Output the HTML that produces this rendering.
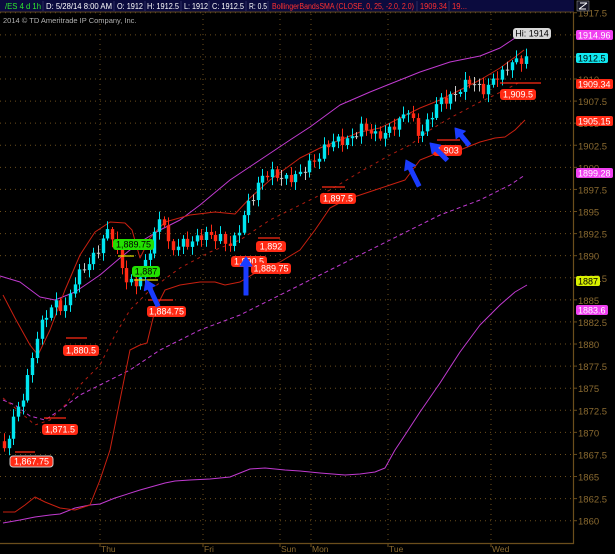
<!DOCTYPE html>
<html><head><meta charset="utf-8">
<style>
html,body{margin:0;padding:0;background:#000;width:615px;height:554px;overflow:hidden}
svg{display:block}
text{font-family:"Liberation Sans",sans-serif}
</style></head>
<body>
<svg id="s" width="615" height="554" viewBox="0 0 615 554" xmlns="http://www.w3.org/2000/svg">
<rect width="615" height="554" fill="#000"/>
<g id="grid"></g>
<rect x="0" y="0" width="574" height="12" fill="#0b0b3e"/>
<line x1="0" y1="12" x2="574" y2="12" stroke="#5a4320" stroke-width="1"/>
<g font-size="8" fill="#fff" lengthAdjust="spacingAndGlyphs">
<text x="5" y="9" fill="#2ee82e" textLength="36" lengthAdjust="spacingAndGlyphs">/ES 4 d 1h</text>
<text x="46" y="9" textLength="66" lengthAdjust="spacingAndGlyphs">D: 5/28/14 8:00 AM</text>
<text x="117" y="9" textLength="26" lengthAdjust="spacingAndGlyphs">O: 1912</text>
<text x="147" y="9" textLength="32" lengthAdjust="spacingAndGlyphs">H: 1912.5</text>
<text x="184" y="9" textLength="24" lengthAdjust="spacingAndGlyphs">L: 1912</text>
<text x="212" y="9" textLength="32" lengthAdjust="spacingAndGlyphs">C: 1912.5</text>
<text x="249" y="9" textLength="18" lengthAdjust="spacingAndGlyphs">R: 0.5</text>
<text x="272" y="9" fill="#ff3030" textLength="142" lengthAdjust="spacingAndGlyphs">BollingerBandsSMA (CLOSE, 0, 25, -2.0, 2.0)</text>
<text x="420" y="9" fill="#ff3030" textLength="27" lengthAdjust="spacingAndGlyphs">1909.34</text>
<text x="452" y="9" fill="#ff3030" textLength="15" lengthAdjust="spacingAndGlyphs">19...</text>
</g>
<g stroke="#34346a" stroke-width="0.8">
<line x1="43" y1="1" x2="43" y2="11"/><line x1="114" y1="1" x2="114" y2="11"/><line x1="145" y1="1" x2="145" y2="11"/><line x1="181" y1="1" x2="181" y2="11"/><line x1="209" y1="1" x2="209" y2="11"/><line x1="246" y1="1" x2="246" y2="11"/><line x1="268" y1="1" x2="268" y2="11"/><line x1="417" y1="1" x2="417" y2="11"/><line x1="449" y1="1" x2="449" y2="11"/>
</g>
<rect x="577" y="1" width="12" height="10" fill="#1a1a2a" stroke="#888" stroke-width="0.6"/>
<path d="M579 9 L587 3 M580 3 L587 3 M579 9 L586 9" stroke="#fff" stroke-width="1" fill="none"/>
<text x="3" y="23" font-size="7.5" fill="#b0b0b0">2014 © TD Ameritrade IP Company, Inc.</text>
<g id="plot"></g>
<g id="lbl"></g>
</svg>
<script>
var NS="http://www.w3.org/2000/svg";
function el(p,t,a,txt){var e=document.createElementNS(NS,t);for(var k in a)e.setAttribute(k,a[k]);if(txt!=null)e.textContent=txt;p.appendChild(e);return e;}
var grid=document.getElementById('grid'),plot=document.getElementById('plot'),lbl=document.getElementById('lbl');
function Y(p){return 79+(1910-p)*8.834;}
for(var p=1860;p<=1917.5;p+=2.5){var y=Y(p);
 el(grid,'line',{x1:0,y1:y,x2:573,y2:y,stroke:'#6b4e1c','stroke-width':1,'stroke-dasharray':'1 4'});
 el(grid,'line',{x1:573,y1:y,x2:577,y2:y,stroke:'#6b4e1c','stroke-width':1});
 el(grid,'text',{x:578,y:y+4,'font-size':'9.5',fill:'#8a6a30'},(p%1?p.toFixed(1):p.toString()));}
var days=[[100,'Thu'],[203,'Fri'],[280,'Sun'],[311,'Mon'],[388,'Tue'],[491,'Wed']];
days.forEach(function(d){el(grid,'line',{x1:d[0],y1:14,x2:d[0],y2:543,stroke:'#6b4e1c','stroke-width':1,'stroke-dasharray':'1 4'});
 el(grid,'line',{x1:d[0],y1:543,x2:d[0],y2:547,stroke:'#6b4e1c'});
 el(grid,'text',{x:d[0]+1,y:552,'font-size':'8.5',fill:'#8a6a30'},d[1]);});
el(grid,'path',{d:'M0 543.5 H573.5 V13',stroke:'#6b4e1c','stroke-width':1.2,fill:'none'});
function pl(pts,col,dash,w){var d='M'+pts.map(function(q){return q.join(' ')}).join(' L');var a={d:d,stroke:col,'stroke-width':w||1,fill:'none','stroke-linejoin':'round'};if(dash)a['stroke-dasharray']=dash;el(plot,'path',a);}
pl([[0,276],[20,282],[40,297],[55,300],[75,292],[100,275],[120,258],[140,242],[160,230],[180,220],[200,205],[230,180],[260,160],[290,140],[310,127],[340,105],[370,92],[400,80],[420,72],[450,62],[480,56],[500,48],[515,38],[521,31]],'#c03ad0');
pl([[3,400],[15,405],[30,416],[45,420],[60,410],[80,395],[100,385],[130,370],[160,350],[200,330],[240,315],[280,295],[320,275],[360,255],[400,235],[440,215],[480,200],[510,185],[525,175]],'#c03ad0','4 3');
pl([[3,523],[20,520],[35,517],[50,515],[60,514],[75,508],[90,505],[100,504],[115,498],[140,490],[165,483],[175,481],[190,480],[210,479],[230,477],[250,469],[265,468],[285,470],[300,471],[320,473],[345,475],[360,474],[375,472],[385,468],[395,450],[405,435],[420,412],[440,383],[460,352],[480,325],[500,305],[515,292],[527,285]],'#c03ad0');
pl([[3,295],[15,318],[30,345],[38,355],[50,330],[65,290],[80,255],[95,232],[110,222],[125,223],[132,230],[140,258],[150,238],[165,222],[190,215],[215,212],[235,214],[250,198],[270,180],[300,158],[320,148],[340,140],[360,132],[380,128],[400,118],[420,108],[440,100],[460,90],[480,80],[500,68],[515,57],[524,50]],'#c82010');
pl([[3,512],[15,512],[25,505],[35,497],[45,502],[60,508],[75,510],[90,505],[100,480],[110,450],[120,400],[130,350],[140,345],[147,343],[155,310],[165,290],[180,285],[200,282],[215,282],[225,285],[240,282],[260,270],[280,262],[300,250],[315,230],[330,208],[345,200],[360,195],[375,190],[390,185],[405,180],[420,160],[440,152],[460,150],[480,142],[495,138],[505,137],[515,130],[525,120]],'#c82010');
pl([[3,398],[20,412],[35,425],[50,420],[65,405],[80,385],[100,365],[115,335],[130,310],[150,290],[180,268],[210,252],[240,240],[270,220],[300,205],[330,190],[360,172],[390,155],[410,145],[430,130],[450,118],[480,102],[505,90],[520,82]],'#b01c10','3 4');
var key=[[5,1868],[15,1872],[25,1875],[35,1880],[45,1883],[55,1885],[65,1884],[75,1887],[85,1889],[100,1891],[110,1893],[118,1890],[128,1887],[138,1886.5],[145,1889],[155,1893],[162,1895],[170,1890],[180,1891.5],[200,1892],[220,1892.3],[232,1891],[240,1893],[248,1896],[262,1899],[280,1899],[300,1899],[315,1901],[325,1902.5],[345,1903],[360,1904.5],[375,1903.5],[390,1904.5],[400,1905],[408,1906.5],[418,1904],[428,1905],[440,1907.5],[455,1908.5],[470,1909.5],[485,1909],[495,1910],[505,1910.5],[512,1912.5],[518,1912],[524,1912.5]];
function interp(x){for(var i=0;i<key.length-1;i++){if(x<=key[i+1][0]){var a=key[i],b=key[i+1],t=(x-a[0])/(b[0]-a[0]);return a[1]+(b[1]-a[1])*t;}}return key[key.length-1][1];}
var prev=1869,n=0;
for(var x=4;x<=526;x+=4.7){n++;
 var c=interp(x)+Math.sin(n*2.3)*0.5+Math.sin(n*0.9)*0.3;
 var o=prev;prev=c;
 var hi=Math.max(o,c)+0.2+Math.abs(Math.sin(n*1.7))*0.7,lo=Math.min(o,c)-0.2-Math.abs(Math.cos(n*1.3))*0.7;
 var up=c>=o,col=Math.abs(c-o)<0.12?'#c8c8c8':(up?'#00e5f0':'#ff2a14');
 var cx=Math.round(x)+0.5;
 el(plot,'line',{x1:cx,y1:Y(hi),x2:cx,y2:Y(lo),stroke:col,'stroke-width':1});
 var yt=Y(Math.max(o,c)),yb=Y(Math.min(o,c));
 el(plot,'rect',{x:cx-1.7,y:yt,width:3.4,height:Math.max(1,yb-yt),fill:col});}
function tag(x,y,w,t,bg,fg,bd){el(lbl,'rect',{x:x,y:y,width:w,height:11,rx:3,fill:bg,stroke:bd||'none','stroke-width':1});el(lbl,'text',{x:x+w/2,y:y+8.6,'text-anchor':'middle','font-size':'9',fill:fg||'#fff'},t);}
function mk(x1,x2,y,col){el(lbl,'line',{x1:x1,y1:y,x2:x2,y2:y,stroke:col||'#ff2a14','stroke-width':1.2});}
mk(15,35,452);tag(10,456,43,'1,867.75','#ff2a14','#fff','#ccc');
mk(44,66,418);tag(42,424,36,'1,871.5','#ff2a14');
mk(66,87,338);tag(63,345,36,'1,880.5','#ff2a14');
mk(148,173,300);tag(147,306,39,'1,884.75','#ff2a14');
mk(258,280,238);tag(256,241,30,'1,892','#ff2a14');
tag(231,256,36,'1,890.5','#ff2a14');
tag(251,263,40,'1,889.75','#ff2a14');
mk(322,345,187);tag(320,193,36,'1,897.5','#ff2a14');
mk(437,460,140);tag(433,145,29,'1,903','#ff2a14');
mk(500,541,83);tag(500,89,36,'1,909.5','#ff2a14');
mk(118,134,256,'#e6e600');tag(113,239,41,'1,889.75','#22e000','#000');
mk(134,158,280,'#e6e600');tag(132,266,28,'1,887','#22e000','#000');
tag(513,28,38,'Hi: 1914','#d8d8d8','#000');
function atag(y,w,t,bg,fg){el(lbl,'rect',{x:576,y:y,width:w,height:10,rx:2,fill:bg});el(lbl,'text',{x:578,y:y+8.3,'font-size':'9',fill:fg||'#fff'},t);}
atag(30,37,'1914.96','#f040f0');atag(53,32,'1912.5','#10e8f0','#000');atag(79,37,'1909.34','#ff2a14');atag(116,37,'1905.15','#ff2a14');atag(168,37,'1899.28','#f040f0');atag(276,24,'1887','#d8f000','#000');atag(305,32,'1883.6','#f040f0');
function arrow(tx,ty,bx,by){var dx=tx-bx,dy=ty-by,L=Math.sqrt(dx*dx+dy*dy),ux=dx/L,uy=dy/L,px=-uy,py=ux;
 var hx=tx-ux*9,hy=ty-uy*9;
 var d='M'+tx+' '+ty+' L'+(hx+px*6)+' '+(hy+py*6)+' L'+(hx+px*2)+' '+(hy+py*2)+' L'+(bx+px*2)+' '+(by+py*2)+' L'+(bx-px*2)+' '+(by-py*2)+' L'+(hx-px*2)+' '+(hy-py*2)+' L'+(hx-px*6)+' '+(hy-py*6)+' Z';
 el(lbl,'path',{d:d,fill:'#1a3cff','stroke':'#1a3cff','stroke-width':1,'stroke-linejoin':'round'});}
arrow(146,280,158,306);arrow(246,257,246,295);arrow(406,160,419,186);arrow(430,143,447,160);arrow(455,128,469,145);
</script>
</body></html>
